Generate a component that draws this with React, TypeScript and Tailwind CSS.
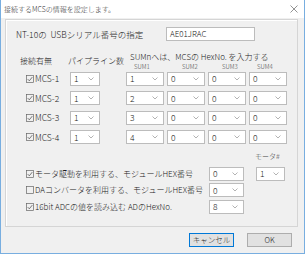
import React from "react";

const rows = [
  { name: "MCS-1", pipe: "1", sums: ["1", "0", "0", "0"] },
  { name: "MCS-2", pipe: "1", sums: ["2", "0", "0", "0"] },
  { name: "MCS-3", pipe: "1", sums: ["3", "0", "0", "0"] },
  { name: "MCS-4", pipe: "1", sums: ["4", "0", "0", "0"] },
];

function Chevron() {
  return (
    <svg width="6" height="4" viewBox="0 0 6 4" className="shrink-0">
      <polyline points="0.5,0.5 3,3 5.5,0.5" fill="none" stroke="#a0a0a0" strokeWidth="0.8" />
    </svg>
  );
}

function Combo({ value, className }: { value: string; className: string }) {
  return (
    <div
      className={`flex h-[14px] items-center justify-between border border-[#bcbcbc] bg-white pl-[3px] pr-[5px] ${className}`}
    >
      <span className="text-[8.5px] leading-none">{value}</span>
      <Chevron />
    </div>
  );
}

function CheckBox({ checked }: { checked: boolean }) {
  return (
    <svg width="8" height="8" viewBox="0 0 8 8" className="shrink-0">
      <rect x="0.5" y="0.5" width="7" height="7" fill="none" stroke="#666" strokeWidth="0.7" />
      {checked && (
        <path d="M1.7 4.1 L3.3 5.8 L6.3 2.1" fill="none" stroke="#444" strokeWidth="0.7" />
      )}
    </svg>
  );
}

export default function App() {
  return (
    <div className="flex h-[254px] w-[305px] flex-col border-x border-b border-[#78aee0] bg-[#f0f0f0] font-['Noto_Sans_CJK_JP',sans-serif] font-light text-[#1a1a1a]">
      {/* title bar */}
      <div className="flex h-[18px] shrink-0 items-center justify-between bg-white pl-[3px] pr-[6px]">
        <span className="text-[7px] leading-none text-[#333]">接続するMCSの情報を設定します。</span>
        <svg width="8" height="8" viewBox="0 0 8 8">
          <path d="M0.5 0.5 L7.5 7.5 M7.5 0.5 L0.5 7.5" stroke="#666" strokeWidth="0.7" />
        </svg>
      </div>

      {/* group box */}
      <div className="ml-[4px] mt-[1px] flex h-[208px] w-[293px] flex-col border border-[#d5d5d5] shadow-[inset_1px_1px_0_#fff]">
        {/* serial number */}
        <div className="mt-[7px] flex h-[14px] items-center pl-[10px]">
          <span className="w-[150px] whitespace-nowrap text-[8.5px] leading-none">NT-10の&nbsp;&nbsp;USBシリアル番号の指定</span>
          <div className="flex h-[14px] w-[89px] items-center border border-[#bcbcbc] bg-white pl-[3px]">
            <span className="text-[8px] leading-none">AE01JRAC</span>
          </div>
        </div>

        {/* header */}
        <div className="mt-[11px] flex items-center pl-[14px]">
          <span className="w-[48px] whitespace-nowrap text-[8px] leading-none">接続有無</span>
          <span className="w-[60px] whitespace-nowrap text-[8px] leading-none">パイプライン数</span>
          <div className="flex flex-col">
            <span className="h-[9px] whitespace-nowrap pl-[2px] text-[8px] leading-[9px]">SUMnへは、MCSの&nbsp;HexNo.&nbsp;を入力する</span>
            <div className="mt-[2px] flex h-[7px] text-[6px] leading-[7px] text-[#444]">
              <span className="w-[41px] pl-[6px]">SUM1</span>
              <span className="w-[41px] pl-[13px]">SUM2</span>
              <span className="w-[41px] pl-[12px]">SUM3</span>
              <span className="w-[38px] pl-[6px]">SUM4</span>
            </div>
          </div>
        </div>

        {/* MCS rows */}
        <div className="mt-[1.5px] flex flex-col gap-[5.5px] pl-[20px]">
          {rows.map((r) => (
            <div key={r.name} className="flex h-[14px] items-center">
              <div className="flex w-[44px] items-center gap-[1px]">
                <CheckBox checked />
                <span className="text-[8.5px] leading-none">{r.name}</span>
              </div>
              <Combo value={r.pipe} className="w-[30px]" />
              <div className="ml-[26px] flex gap-[3px]">
                {r.sums.map((s, i) => (
                  <Combo key={i} value={s} className="w-[38px]" />
                ))}
              </div>
            </div>
          ))}
        </div>

        {/* options */}
        <div className="mt-[8.5px] flex h-[8px] items-center pl-[249px]">
          <span className="text-[7px] leading-none text-[#444]">モータ#</span>
        </div>
        <div className="mt-[6px] flex flex-col gap-[2.5px] pl-[20px]">
          <div className="flex h-[14px] items-center">
            <div className="flex w-[183px] items-center gap-[1px]">
              <CheckBox checked />
              <span className="whitespace-nowrap text-[8px] leading-none">モータ駆動を利用する、モジュールHEX番号</span>
            </div>
            <Combo value="0" className="w-[35px]" />
            <Combo value="1" className="ml-[12px] w-[29px]" />
          </div>
          <div className="flex h-[14px] items-center">
            <div className="flex w-[183px] items-center gap-[1px]">
              <CheckBox checked={false} />
              <span className="whitespace-nowrap text-[8px] leading-none">DAコンバータを利用する、モジュールHEX番号</span>
            </div>
            <Combo value="0" className="w-[35px]" />
          </div>
          <div className="flex h-[14px] items-center">
            <div className="flex w-[183px] items-center gap-[1px]">
              <CheckBox checked />
              <span className="whitespace-nowrap text-[8px] leading-none">16bit ADCの値を読み込む&nbsp;ADのHexNo.</span>
            </div>
            <Combo value="8" className="w-[35px]" />
          </div>
        </div>
      </div>

      {/* buttons */}
      <div className="mt-[6px] flex justify-end gap-[13px] pr-[12px]">
        <button className="flex h-[14px] w-[45px] items-center justify-center border border-[#0078d7] bg-[#e1e1e1] text-[7.5px] leading-none">
          キャンセル
        </button>
        <button className="flex h-[14px] w-[45px] items-center justify-center border border-[#adadad] bg-[#e1e1e1] text-[7.5px] leading-none">
          OK
        </button>
      </div>
    </div>
  );
}
